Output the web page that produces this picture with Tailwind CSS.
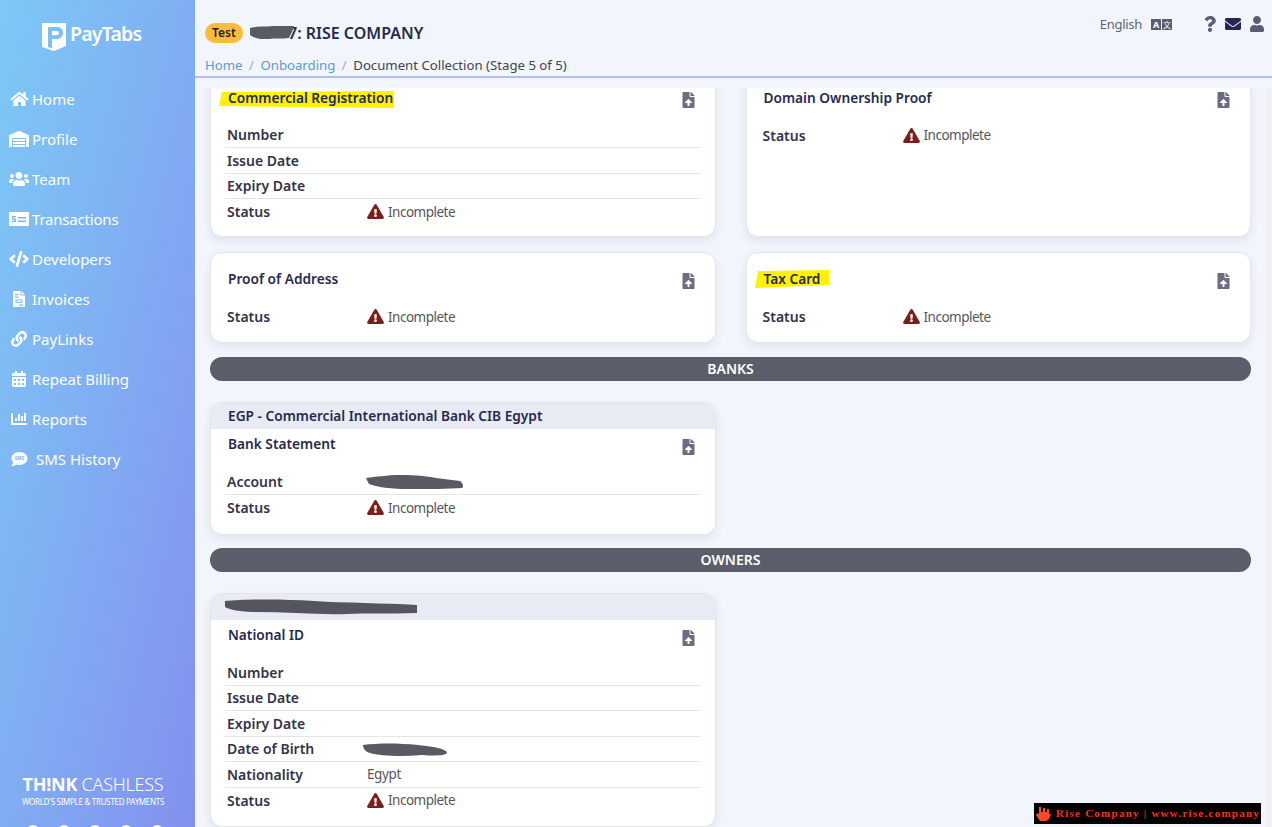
<!DOCTYPE html>
<html lang="en">
<head>
    <meta charset="UTF-8">
    <title>PayTabs - Document Collection</title>
    <script src="https://cdn.jsdelivr.net/npm/@tailwindcss/browser@4"></script>
</head>
<body class="bg-[#f2f5fb] font-['Noto_Sans','Open_Sans',sans-serif] text-[14px] text-[#555560]">
<div class="relative flex h-[827px] w-[1272px] overflow-hidden">

    <!-- sidebar -->
    <aside class="flex h-full w-[195px] shrink-0 flex-col overflow-hidden bg-linear-to-br from-[#7cc9f6] to-[#8290ee] text-white">
        <div class="flex h-[79px] items-start pl-[42px] pt-[22px]">
            <svg class="h-[29px] w-[24px]" viewBox="0 0 24 29"><path fill="#fff" fill-rule="evenodd" d="M0 1h24v23l-12 5-12-4zM6 5v20l4 1.500V17h5c3.500 0 6-2.500 6-6.200S18.500 5 15 5zM10 9h4.500c1.500 0 2.500.8 2.500 2s-1 2.200-2.500 2.200H10z"/></svg>
            <span class="ml-[4px] text-[19.500px] leading-[24px] font-semibold tracking-[-0.8px]">PayTabs</span>
        </div>
        <nav class="text-[15px]">
            <a class="flex h-10 items-center" href="#"><svg class="ml-[10px] mr-[3px] h-[16px] w-[19px] fill-white" viewBox="0 0 576 512"><path d="M280.37 148.26L96 300.11V464a16 16 0 0 0 16 16l112.06-.29a16 16 0 0 0 15.92-16V368a16 16 0 0 1 16-16h64a16 16 0 0 1 16 16v95.64a16 16 0 0 0 16 16.05L464 480a16 16 0 0 0 16-16V300L295.67 148.26a12.19 12.19 0 0 0-15.3 0zM571.6 251.47L488 182.56V44.05a12 12 0 0 0-12-12h-56a12 12 0 0 0-12 12v72.61L318.47 43a48 48 0 0 0-61 0L4.34 251.47a12 12 0 0 0-1.6 16.9l25.5 31A12 12 0 0 0 45.15 301l235.22-193.74a12.19 12.19 0 0 1 15.3 0L530.9 301a12 12 0 0 0 16.9-1.6l25.5-31a12 12 0 0 0-1.7-16.93z"/></svg>Home</a>
            <a class="flex h-10 items-center" href="#"><svg class="ml-[9px] mr-[3px] h-[16px] w-[20px] fill-white" viewBox="0 0 640 512"><path d="M504 352H136.400c-4.400 0-8 3.600-8 8l-.1 48c0 4.400 3.600 8 8 8H504c4.400 0 8-3.600 8-8v-48c0-4.400-3.600-8-8-8zm0 96H136.100c-4.400 0-8 3.600-8 8l-.1 48c0 4.400 3.600 8 8 8h368c4.400 0 8-3.600 8-8v-48c0-4.400-3.600-8-8-8zm0-192H136.600c-4.400 0-8 3.600-8 8l-.1 48c0 4.400 3.600 8 8 8H504c4.400 0 8-3.600 8-8v-48c0-4.400-3.600-8-8-8zm106.500-139L338.400 3.700a48.150 48.150 0 0 0-36.900 0L29.500 117C11.700 124.500 0 141.900 0 161.300V504c0 4.400 3.600 8 8 8h80c4.400 0 8-3.600 8-8V256c0-17.600 14.600-32 32.600-32h382.800c18 0 32.600 14.400 32.600 32v248c0 4.400 3.600 8 8 8h80c4.400 0 8-3.600 8-8V161.300c0-19.400-11.700-36.800-29.500-44.300z"/></svg>Profile</a>
            <a class="flex h-10 items-center" href="#"><svg class="ml-[9px] mr-[3px] h-[16px] w-[20px] fill-white" viewBox="0 0 640 512"><path d="M96 224c35.300 0 64-28.700 64-64s-28.700-64-64-64-64 28.700-64 64 28.700 64 64 64zm448 0c35.300 0 64-28.700 64-64s-28.700-64-64-64-64 28.700-64 64 28.700 64 64 64zm32 32h-64c-17.600 0-33.500 7.100-45.100 18.600 40.300 22.100 68.900 62 75.100 109.400h66c17.700 0 32-14.300 32-32v-32c0-35.300-28.700-64-64-64zm-256 0c61.900 0 112-50.100 112-112S381.900 32 320 32 208 82.100 208 144s50.100 112 112 112zm76.800 32h-8.300c-20.800 10-43.900 16-68.500 16s-47.600-6-68.500-16h-8.300C179.600 288 128 339.600 128 403.200V432c0 26.500 21.500 48 48 48h288c26.500 0 48-21.500 48-48v-28.800c0-63.600-51.600-115.200-115.200-115.200zm-223.700-13.400C161.500 263.100 145.600 256 128 256H64c-35.300 0-64 28.700-64 64v32c0 17.700 14.300 32 32 32h65.900c6.300-47.400 34.900-87.300 75.200-109.400z"/></svg>Team</a>
            <a class="flex h-10 items-center tracking-[-0.2px]" href="#"><svg class="ml-[9px] mr-[3px] h-[14px] w-[20px]" viewBox="0 0 20 14"><rect width="20" height="14" fill="#fff"/><path fill="#7fb6f1" d="M9 5h8v1.500H9zM9 8.500h8V10H9zM3 4h4v1.300H4.300v1.200H7V10H3V8.700h2.700V7.700H3z"/></svg>Transactions</a>
            <a class="flex h-10 items-center" href="#"><svg class="ml-[9px] mr-[3px] h-[16px] w-[20px] fill-white" viewBox="0 0 640 512"><path d="M278.900 511.500l-61-17.700c-6.400-1.800-10-8.500-8.200-14.900L346.200 8.700c1.800-6.400 8.500-10 14.900-8.200l61 17.700c6.400 1.800 10 8.500 8.200 14.900L293.800 503.300c-1.900 6.400-8.500 10.100-14.900 8.200zm-114-112.200l43.500-46.400c4.600-4.900 4.300-12.700-.8-17.200L117 256l90.600-79.700c5.100-4.500 5.500-12.300.8-17.200l-43.500-46.400c-4.500-4.800-12.100-5.100-17-.5L3.800 247.200c-5.100 4.700-5.100 12.800 0 17.500l144.100 135.100c4.900 4.600 12.500 4.400 17-.5zm327.200.6l144.100-135.100c5.100-4.700 5.100-12.800 0-17.500L492.100 112.100c-4.800-4.500-12.400-4.300-17 .5L431.600 159c-4.600 4.900-4.300 12.700.8 17.200L523 256l-90.600 79.700c-5.100 4.500-5.500 12.300-.8 17.200l43.500 46.400c4.500 4.900 12.100 5.100 17 .6z"/></svg>Developers</a>
            <a class="flex h-10 items-center" href="#"><svg class="ml-[13px] mr-[7px] h-[16px] w-[12px]" viewBox="0 0 12 16"><path fill="#fff" fill-rule="evenodd" d="M0 0h7.500v4.500H12V16H0zM8.500 0L12 3.500H8.500zM2 3v1.200h3.500V3zM2 5.500v1.200h3.500V5.500zM2.500 8.500V12h7V8.500zM3.500 9.500h5V11h-5zM6 13.500v1.200h4v-1.200z"/></svg>Invoices</a>
            <a class="flex h-10 items-center" href="#"><svg class="ml-[11px] mr-[5px] h-[16px] w-[16px] fill-white" viewBox="0 0 512 512"><path d="M326.612 185.391c59.747 59.809 58.927 155.698.36 214.590-.11.12-.24.25-.36.37l-67.200 67.200c-59.270 59.270-155.699 59.262-214.960 0-59.270-59.260-59.270-155.700 0-214.960l37.106-37.106c9.840-9.840 26.786-3.300 27.294 10.606.648 17.722 3.826 35.527 9.690 52.721 1.986 5.822.567 12.262-3.783 16.612l-13.087 13.087c-28.026 28.026-28.905 73.660-1.155 101.960 28.024 28.579 74.086 28.749 102.325.51l67.200-67.190c28.191-28.191 28.073-73.757 0-101.830-3.701-3.694-7.429-6.564-10.341-8.569a16.037 16.037 0 0 1-6.947-12.606c-.396-10.567 3.348-21.456 11.698-29.806l21.054-21.055c5.521-5.521 14.182-6.199 20.584-1.731a152.482 152.482 0 0 1 20.522 17.197zM467.547 44.449c-59.261-59.262-155.690-59.270-214.960 0l-67.200 67.200c-.12.12-.25.25-.36.37-58.566 58.892-59.387 154.781.36 214.590a152.454 152.454 0 0 0 20.521 17.196c6.402 4.468 15.064 3.789 20.584-1.731l21.054-21.055c8.350-8.350 12.094-19.239 11.698-29.806a16.037 16.037 0 0 0-6.947-12.606c-2.912-2.005-6.640-4.875-10.341-8.569-28.073-28.073-28.191-73.639 0-101.830l67.200-67.190c28.239-28.239 74.300-28.069 102.325.51 27.750 28.300 26.872 73.934-1.155 101.960l-13.087 13.087c-4.350 4.350-5.769 10.790-3.783 16.612 5.864 17.194 9.042 34.999 9.690 52.721.509 13.906 17.454 20.446 27.294 10.606l37.106-37.106c59.271-59.259 59.271-155.699.001-214.959z"/></svg>PayLinks</a>
            <a class="flex h-10 items-center" href="#"><svg class="ml-[12px] mr-[6px] h-[16px] w-[14px] fill-white" viewBox="0 0 448 512"><path d="M0 464c0 26.500 21.500 48 48 48h352c26.500 0 48-21.500 48-48V192H0v272zm320-196c0-6.600 5.400-12 12-12h40c6.600 0 12 5.400 12 12v40c0 6.600-5.400 12-12 12h-40c-6.600 0-12-5.400-12-12v-40zm0 128c0-6.600 5.400-12 12-12h40c6.600 0 12 5.400 12 12v40c0 6.600-5.400 12-12 12h-40c-6.600 0-12-5.400-12-12v-40zM192 268c0-6.600 5.400-12 12-12h40c6.600 0 12 5.400 12 12v40c0 6.600-5.400 12-12 12h-40c-6.600 0-12-5.400-12-12v-40zm0 128c0-6.600 5.400-12 12-12h40c6.600 0 12 5.400 12 12v40c0 6.600-5.400 12-12 12h-40c-6.600 0-12-5.400-12-12v-40zM64 268c0-6.600 5.400-12 12-12h40c6.600 0 12 5.400 12 12v40c0 6.600-5.400 12-12 12H76c-6.600 0-12-5.400-12-12v-40zm0 128c0-6.600 5.400-12 12-12h40c6.600 0 12 5.400 12 12v40c0 6.600-5.400 12-12 12H76c-6.600 0-12-5.400-12-12v-40zM400 64h-48V16c0-8.800-7.200-16-16-16h-32c-8.800 0-16 7.200-16 16v48H160V16c0-8.800-7.200-16-16-16h-32c-8.800 0-16 7.200-16 16v48H48C21.500 64 0 85.500 0 112v48h448v-48c0-26.500-21.500-48-48-48z"/></svg>Repeat Billing</a>
            <a class="flex h-10 items-center" href="#"><svg class="ml-[11px] mr-[5px] h-[16px] w-[16px] fill-white" viewBox="0 0 512 512"><path d="M332.800 320h38.400c6.400 0 12.800-6.400 12.800-12.800V172.800c0-6.400-6.400-12.800-12.800-12.800h-38.400c-6.400 0-12.800 6.400-12.800 12.800v134.400c0 6.400 6.400 12.800 12.800 12.800zm96 0h38.400c6.400 0 12.800-6.400 12.800-12.800V76.800c0-6.400-6.400-12.800-12.800-12.800h-38.400c-6.400 0-12.800 6.400-12.800 12.800v230.400c0 6.400 6.400 12.800 12.800 12.800zm-288 0h38.400c6.400 0 12.800-6.400 12.800-12.800v-70.400c0-6.400-6.400-12.800-12.800-12.800h-38.400c-6.400 0-12.800 6.400-12.800 12.800v70.400c0 6.400 6.400 12.800 12.800 12.800zm96 0h38.400c6.400 0 12.800-6.400 12.800-12.800V108.800c0-6.400-6.400-12.800-12.800-12.800h-38.400c-6.400 0-12.800 6.400-12.800 12.800v198.400c0 6.400 6.400 12.800 12.800 12.800zM496 384H64V80c0-8.840-7.160-16-16-16H16C7.160 64 0 71.160 0 80v336c0 17.670 14.330 32 32 32h464c8.840 0 16-7.160 16-16v-32c0-8.840-7.160-16-16-16z"/></svg>Reports</a>
            <a class="flex h-10 items-center" href="#"><svg class="ml-[11px] mr-[8px] h-[16px] w-[17px]" viewBox="0 0 512 512"><path fill="#fff" d="M256 32C114.600 32 0 125.100 0 240c0 49.600 21.400 95 57 130.700C44.500 421.100 2.700 466 2.200 466.500c-2.200 2.300-2.800 5.700-1.500 8.700S4.800 480 8 480c66.300 0 116-31.800 140.600-51.400 32.700 12.300 69 19.400 107.400 19.400 141.400 0 256-93.100 256-208S397.400 32 256 32z"/><text x="256" y="290" text-anchor="middle" font-size="150" font-weight="700" fill="#7fb4f1">SMS</text></svg>SMS History</a>
        </nav>
        <div class="mt-auto flex flex-col items-center pr-[9px]">
            <div class="text-[18px] leading-[22px] font-light tracking-[-0.25px]"><span class="font-bold">TH!NK</span> CASHLESS</div>
            <div class="mt-[1px] text-[8px] leading-[12px] tracking-[-0.28px]">WORLD'S SIMPLE &amp; TRUSTED PAYMENTS</div>
            <div class="mt-[17px] -mb-[10px] flex gap-[19px] pl-[3px]">
                <span class="size-[12px] rounded-full bg-white"></span>
                <span class="size-[12px] rounded-full bg-white"></span>
                <span class="size-[12px] rounded-full bg-white"></span>
                <span class="size-[12px] rounded-full bg-white"></span>
                <span class="size-[12px] rounded-full bg-white"></span>
            </div>
        </div>
    </aside>

    <!-- main -->
    <div class="flex min-w-0 flex-1 flex-col">
        <header class="h-[78px] shrink-0 border-b-2 border-[#b5bdf0] pl-[10px] pr-[8px]">
            <div class="flex h-[55px] items-start justify-between">
                <div class="relative mt-[22px] flex items-center">
                    <span class="flex h-[20px] w-[38px] items-center justify-center rounded-full bg-[#fbbc3c] text-[12px] font-semibold text-[#1f1f2e]">Test</span>
                    <span class="ml-[7px] text-[16px] leading-[22px] font-semibold text-[#262a52]"><span class="inline-block w-[38px]"></span>7: RISE COMPANY</span>
                    <svg class="absolute left-[44px] top-[4px] h-[13px] w-[46px] blur-[0.5px]" viewBox="0 0 46 13"><path fill="#5a5a62" d="M1 2C8 0 16 1 24 0s14 0 21 0c-1 4-3 8-5 12-8 1-14 0-20 1S4 12 1 9z"/></svg>
                </div>
                <div class="flex items-center pt-[13px]">
                    <span class="ml-[2px] text-[13px] leading-[22px] tracking-[-0.3px] text-[#5f6180]">English</span>
                    <svg class="ml-[9px] mr-[32px] h-[11px] w-[21px]" viewBox="0 0 21 11"><rect width="10" height="11" fill="#5a5c70"/><rect x="11" width="10" height="11" fill="#5a5c70"/><text x="5" y="9" text-anchor="middle" font-size="9" font-weight="700" fill="#fff">A</text><text x="16" y="9" text-anchor="middle" font-size="8" fill="#fff" font-family="Noto Sans CJK SC, sans-serif">文</text></svg>
                    <svg class="mr-[9px] h-[16px] w-[12px] fill-[#5a5c70]" viewBox="0 0 384 512"><path d="M202.021 0C122.202 0 70.503 32.703 29.914 91.026c-7.363 10.580-5.093 25.086 5.178 32.874l43.138 32.709c10.373 7.865 25.132 6.026 33.253-4.148 25.049-31.381 43.630-49.449 82.757-49.449 30.764 0 68.816 19.799 68.816 49.631 0 22.552-18.617 34.134-48.993 51.164-35.423 19.860-82.299 44.576-82.299 106.405V320c0 13.255 10.745 24 24 24h72.471c13.255 0 24-10.745 24-24v-5.773c0-42.860 125.268-44.645 125.268-160.627C377.504 66.256 286.902 0 202.021 0zM192 373.459c-38.196 0-69.271 31.075-69.271 69.271 0 38.195 31.075 69.270 69.271 69.270s69.271-31.075 69.271-69.271-31.075-69.270-69.271-69.270z"/></svg>
                    <svg class="mr-[9px] h-[16px] w-[16px] fill-[#252850]" viewBox="0 0 512 512"><path d="M502.300 190.800c3.900-3.100 9.700-.2 9.700 4.700V400c0 26.500-21.500 48-48 48H48c-26.500 0-48-21.500-48-48V195.600c0-5 5.700-7.800 9.700-4.700 22.400 17.400 52.100 39.500 154.100 113.600 21.100 15.400 56.700 47.800 92.200 47.600 35.700.3 72-32.800 92.300-47.600 102-74.100 131.600-96.300 154-113.700zM256 320c23.200.4 56.600-29.200 73.400-41.400 132.700-96.300 142.800-104.700 173.400-128.700 5.800-4.500 9.200-11.500 9.200-18.900v-19c0-26.500-21.500-48-48-48H48C21.500 64 0 85.500 0 112v19c0 7.400 3.400 14.300 9.200 18.900 30.600 23.900 40.700 32.400 173.400 128.700 16.800 12.200 50.200 41.800 73.400 41.400z"/></svg>
                    <svg class="h-[16px] w-[14px] fill-[#5a5c70]" viewBox="0 0 448 512"><path d="M224 256c70.700 0 128-57.300 128-128S294.700 0 224 0 96 57.300 96 128s57.300 128 128 128zm89.600 32h-16.700c-22.200 10.200-46.900 16-72.900 16s-50.600-5.800-72.900-16h-16.700C60.200 288 0 348.200 0 422.400V464c0 26.500 21.500 48 48 48h352c26.500 0 48-21.500 48-48v-41.600c0-74.200-60.200-134.400-134.400-134.400z"/></svg>
                </div>
            </div>
            <div class="flex h-[21px] items-center text-[13.200px] text-[#444450]">
                <a class="text-[#5b9bd8]" href="#">Home</a><span class="mx-[6.500px] text-[#a9a9b3]">/</span><a class="text-[#5b9bd8]" href="#">Onboarding</a><span class="mx-[6.500px] text-[#a9a9b3]">/</span><span>Document Collection (Stage 5 of 5)</span>
            </div>
        </header>

        <div class="mt-[10px] flex min-h-0 flex-1 overflow-hidden">
            <main class="min-w-0 flex-1 pl-[15px] pr-[15px]">
                <div class="-mt-[17px] flex flex-col">

                    <div class="grid grid-cols-2 gap-x-[30px] gap-y-[15px]">
                        <section class="relative h-[166px] rounded-[12px] border border-[#e4e5ea] bg-white shadow-[0_4px_10px_rgba(30,40,80,0.08)]">
                            <div class="flex h-[50.500px] justify-between pl-[17px] pr-[20px] pt-[14px]">
                                <h3 class="relative text-[13.700px] leading-[24px] font-semibold text-[#262a52]"><svg class="absolute -left-[9px] top-[5px] h-[18px] w-[176px]" viewBox="0 0 176 18"><path fill="#fff200" d="M3 1L175 0V17L0 15z"/></svg><span class="relative">Commercial Registration</span></h3>
                                <svg class="mt-[6px] h-[16px] w-[13px] fill-[#6c6d80]" viewBox="0 0 384 512"><path d="M224 136V0H24C10.700 0 0 10.700 0 24v464c0 13.300 10.700 24 24 24h336c13.300 0 24-10.700 24-24V160H248c-13.200 0-24-10.800-24-24zm65.180 216.010H224v80c0 8.840-7.160 16-16 16h-32c-8.840 0-16-7.160-16-16v-80H94.820c-14.280 0-21.410-17.290-11.270-27.360l96.420-95.700c6.650-6.610 17.390-6.610 24.040 0l96.420 95.700c10.150 10.070 3.030 27.360-11.250 27.360zM377 105L279.100 7c-4.500-4.500-10.600-7-17-7H256v128h128v-6.100c0-6.300-2.500-12.400-7-16.900z"/></svg>
                            </div>
                            <div class="mx-[14px] flex h-[25.500px] items-center border-b border-[#e3e4ef] pl-[2px]"><span class="w-[140px] font-semibold text-[#33334b]">Number</span></div>
                            <div class="mx-[14px] flex h-[25.500px] items-center border-b border-[#e3e4ef] pl-[2px]"><span class="w-[140px] font-semibold text-[#33334b]">Issue Date</span></div>
                            <div class="mx-[14px] flex h-[25.500px] items-center border-b border-[#e3e4ef] pl-[2px]"><span class="w-[140px] font-semibold text-[#33334b]">Expiry Date</span></div>
                            <div class="mx-[14px] flex h-[25.500px] items-center pl-[2px]"><span class="w-[140px] font-semibold text-[#33334b]">Status</span><svg class="mr-[4px] h-[15px] w-[17px] fill-[#7b1f1c]" viewBox="0 0 576 512"><path d="M569.517 440.013C587.975 472.007 564.806 512 527.940 512H48.054c-36.937 0-59.999-40.055-41.577-71.987L246.423 23.985c18.467-32.009 64.720-31.951 83.154 0l239.940 416.028zM288 354c-25.405 0-46 20.595-46 46s20.595 46 46 46 46-20.595 46-46-20.595-46-46-46zm-43.673-165.346l7.418 136c.347 6.364 5.609 11.346 11.982 11.346h48.546c6.373 0 11.635-4.982 11.982-11.346l7.418-136c.375-6.874-5.098-12.654-11.982-12.654h-63.383c-6.884 0-12.356 5.780-11.981 12.654z"/></svg><span class="text-[13.500px] tracking-[-0.5px]">Incomplete</span></div>
                        </section>

                        <section class="relative h-[166px] rounded-[12px] border border-[#e4e5ea] bg-white shadow-[0_4px_10px_rgba(30,40,80,0.08)]">
                            <div class="flex h-[50.500px] justify-between pl-[17px] pr-[20px] pt-[14px]">
                                <h3 class="text-[13.700px] leading-[24px] font-semibold text-[#262a52]">Domain Ownership Proof</h3>
                                <svg class="mt-[6px] h-[16px] w-[13px] fill-[#6c6d80]" viewBox="0 0 384 512"><path d="M224 136V0H24C10.700 0 0 10.700 0 24v464c0 13.300 10.700 24 24 24h336c13.300 0 24-10.700 24-24V160H248c-13.200 0-24-10.800-24-24zm65.180 216.010H224v80c0 8.840-7.160 16-16 16h-32c-8.840 0-16-7.160-16-16v-80H94.820c-14.280 0-21.410-17.290-11.270-27.360l96.420-95.700c6.650-6.610 17.390-6.610 24.040 0l96.420 95.700c10.150 10.070 3.030 27.360-11.250 27.360zM377 105L279.100 7c-4.500-4.500-10.600-7-17-7H256v128h128v-6.100c0-6.300-2.500-12.400-7-16.900z"/></svg>
                            </div>
                            <div class="mx-[14px] flex h-[25.500px] items-center pl-[2px]"><span class="w-[140px] font-semibold text-[#33334b]">Status</span><svg class="mr-[4px] h-[15px] w-[17px] fill-[#7b1f1c]" viewBox="0 0 576 512"><path d="M569.517 440.013C587.975 472.007 564.806 512 527.940 512H48.054c-36.937 0-59.999-40.055-41.577-71.987L246.423 23.985c18.467-32.009 64.720-31.951 83.154 0l239.940 416.028zM288 354c-25.405 0-46 20.595-46 46s20.595 46 46 46 46-20.595 46-46-20.595-46-46-46zm-43.673-165.346l7.418 136c.347 6.364 5.609 11.346 11.982 11.346h48.546c6.373 0 11.635-4.982 11.982-11.346l7.418-136c.375-6.874-5.098-12.654-11.982-12.654h-63.383c-6.884 0-12.356 5.780-11.981 12.654z"/></svg><span class="text-[13.500px] tracking-[-0.5px]">Incomplete</span></div>
                        </section>

                        <section class="relative h-[91px] rounded-[12px] border border-[#e4e5ea] bg-white shadow-[0_4px_10px_rgba(30,40,80,0.08)]">
                            <div class="flex h-[51px] justify-between pl-[17px] pr-[20px] pt-[14px]">
                                <h3 class="text-[13.700px] leading-[24px] font-semibold text-[#262a52]">Proof of Address</h3>
                                <svg class="mt-[6px] h-[16px] w-[13px] fill-[#6c6d80]" viewBox="0 0 384 512"><path d="M224 136V0H24C10.700 0 0 10.700 0 24v464c0 13.300 10.700 24 24 24h336c13.300 0 24-10.700 24-24V160H248c-13.200 0-24-10.800-24-24zm65.180 216.010H224v80c0 8.840-7.160 16-16 16h-32c-8.840 0-16-7.160-16-16v-80H94.820c-14.280 0-21.410-17.290-11.270-27.360l96.420-95.700c6.650-6.610 17.390-6.610 24.040 0l96.420 95.700c10.150 10.070 3.030 27.360-11.250 27.360zM377 105L279.100 7c-4.500-4.500-10.600-7-17-7H256v128h128v-6.100c0-6.300-2.500-12.400-7-16.900z"/></svg>
                            </div>
                            <div class="mx-[14px] flex h-[25.500px] items-center pl-[2px]"><span class="w-[140px] font-semibold text-[#33334b]">Status</span><svg class="mr-[4px] h-[15px] w-[17px] fill-[#7b1f1c]" viewBox="0 0 576 512"><path d="M569.517 440.013C587.975 472.007 564.806 512 527.940 512H48.054c-36.937 0-59.999-40.055-41.577-71.987L246.423 23.985c18.467-32.009 64.720-31.951 83.154 0l239.940 416.028zM288 354c-25.405 0-46 20.595-46 46s20.595 46 46 46 46-20.595 46-46-20.595-46-46-46zm-43.673-165.346l7.418 136c.347 6.364 5.609 11.346 11.982 11.346h48.546c6.373 0 11.635-4.982 11.982-11.346l7.418-136c.375-6.874-5.098-12.654-11.982-12.654h-63.383c-6.884 0-12.356 5.780-11.981 12.654z"/></svg><span class="text-[13.500px] tracking-[-0.5px]">Incomplete</span></div>
                        </section>

                        <section class="relative h-[91px] rounded-[12px] border border-[#e4e5ea] bg-white shadow-[0_4px_10px_rgba(30,40,80,0.08)]">
                            <div class="flex h-[51px] justify-between pl-[17px] pr-[20px] pt-[14px]">
                                <h3 class="relative text-[13.700px] leading-[24px] font-semibold text-[#262a52]"><svg class="absolute -left-[9px] top-[3px] h-[18px] w-[74px]" viewBox="0 0 74 18"><path fill="#fff200" d="M3 1L74 0V15L0 18z"/></svg><span class="relative">Tax Card</span></h3>
                                <svg class="mt-[6px] h-[16px] w-[13px] fill-[#6c6d80]" viewBox="0 0 384 512"><path d="M224 136V0H24C10.700 0 0 10.700 0 24v464c0 13.300 10.700 24 24 24h336c13.300 0 24-10.700 24-24V160H248c-13.200 0-24-10.800-24-24zm65.180 216.010H224v80c0 8.840-7.160 16-16 16h-32c-8.840 0-16-7.160-16-16v-80H94.820c-14.280 0-21.410-17.290-11.270-27.360l96.420-95.700c6.650-6.610 17.390-6.610 24.040 0l96.420 95.700c10.150 10.070 3.030 27.360-11.250 27.360zM377 105L279.100 7c-4.500-4.500-10.600-7-17-7H256v128h128v-6.100c0-6.300-2.500-12.400-7-16.900z"/></svg>
                            </div>
                            <div class="mx-[14px] flex h-[25.500px] items-center pl-[2px]"><span class="w-[140px] font-semibold text-[#33334b]">Status</span><svg class="mr-[4px] h-[15px] w-[17px] fill-[#7b1f1c]" viewBox="0 0 576 512"><path d="M569.517 440.013C587.975 472.007 564.806 512 527.940 512H48.054c-36.937 0-59.999-40.055-41.577-71.987L246.423 23.985c18.467-32.009 64.720-31.951 83.154 0l239.940 416.028zM288 354c-25.405 0-46 20.595-46 46s20.595 46 46 46 46-20.595 46-46-20.595-46-46-46zm-43.673-165.346l7.418 136c.347 6.364 5.609 11.346 11.982 11.346h48.546c6.373 0 11.635-4.982 11.982-11.346l7.418-136c.375-6.874-5.098-12.654-11.982-12.654h-63.383c-6.884 0-12.356 5.780-11.981 12.654z"/></svg><span class="text-[13.500px] tracking-[-0.5px]">Incomplete</span></div>
                        </section>
                    </div>

                    <div class="mt-[14px] flex h-[24px] items-center justify-center rounded-[12px] bg-[#5b5d6b] pb-[2px] text-[14px] font-semibold text-white">BANKS</div>

                    <div class="mt-[21px] grid grid-cols-2 gap-x-[30px]">
                        <section class="relative h-[133px] rounded-[12px] border border-[#e4e5ea] bg-white shadow-[0_4px_10px_rgba(30,40,80,0.08)]">
                            <div class="flex h-[26px] items-center rounded-t-[11px] bg-[#e8ebf4] pl-[17px] text-[13.700px] font-semibold text-[#262a52]">EGP - Commercial International Bank CIB Egypt</div>
                            <div class="flex h-[40px] justify-between pl-[17px] pr-[20px] pt-[3px]">
                                <h3 class="text-[13.700px] leading-[24px] font-semibold text-[#262a52]">Bank Statement</h3>
                                <svg class="mt-[7px] h-[16px] w-[13px] fill-[#6c6d80]" viewBox="0 0 384 512"><path d="M224 136V0H24C10.700 0 0 10.700 0 24v464c0 13.300 10.700 24 24 24h336c13.300 0 24-10.700 24-24V160H248c-13.200 0-24-10.800-24-24zm65.180 216.010H224v80c0 8.840-7.160 16-16 16h-32c-8.840 0-16-7.160-16-16v-80H94.820c-14.280 0-21.410-17.290-11.270-27.360l96.420-95.700c6.650-6.610 17.390-6.610 24.040 0l96.420 95.700c10.150 10.070 3.030 27.360-11.250 27.360zM377 105L279.100 7c-4.500-4.500-10.600-7-17-7H256v128h128v-6.100c0-6.300-2.500-12.400-7-16.900z"/></svg>
                            </div>
                            <div class="relative mx-[14px] flex h-[26px] items-center border-b border-[#e3e4ef] pl-[2px]"><span class="w-[140px] font-semibold text-[#33334b]">Account</span><svg class="absolute left-[141px] top-[6px] h-[14px] w-[98px] blur-[0.5px]" viewBox="0 0 98 14"><path fill="#5a5a62" d="M0 3C10 2 20 0 36 0c14 0 24 1 34 3l24 3c3 2 4 6 2 7-14 1-34 1-52 1S10 12 3 9z"/></svg></div>
                            <div class="mx-[14px] flex h-[25.500px] items-center pl-[2px]"><span class="w-[140px] font-semibold text-[#33334b]">Status</span><svg class="mr-[4px] h-[15px] w-[17px] fill-[#7b1f1c]" viewBox="0 0 576 512"><path d="M569.517 440.013C587.975 472.007 564.806 512 527.940 512H48.054c-36.937 0-59.999-40.055-41.577-71.987L246.423 23.985c18.467-32.009 64.720-31.951 83.154 0l239.940 416.028zM288 354c-25.405 0-46 20.595-46 46s20.595 46 46 46 46-20.595 46-46-20.595-46-46-46zm-43.673-165.346l7.418 136c.347 6.364 5.609 11.346 11.982 11.346h48.546c6.373 0 11.635-4.982 11.982-11.346l7.418-136c.375-6.874-5.098-12.654-11.982-12.654h-63.383c-6.884 0-12.356 5.780-11.981 12.654z"/></svg><span class="text-[13.500px] tracking-[-0.5px]">Incomplete</span></div>
                        </section>
                    </div>

                    <div class="mt-[13px] flex h-[24px] items-center justify-center rounded-[12px] bg-[#5b5d6b] pb-[2px] text-[14px] font-semibold text-white">OWNERS</div>

                    <div class="mt-[21px] grid grid-cols-2 gap-x-[30px]">
                        <section class="relative h-[234px] rounded-[12px] border border-[#e4e5ea] bg-white shadow-[0_4px_10px_rgba(30,40,80,0.08)]">
                            <div class="relative h-[26px] rounded-t-[11px] bg-[#e8ebf4]"><svg class="absolute left-[13px] top-[5px] h-[16px] w-[194px] blur-[0.5px]" viewBox="0 0 194 16"><path fill="#55555e" d="M1 2C20 0 60 0 90 2s70 2 103 4v8c-30 1-50 0-70 1-30 1-60-2-90-2C20 13 5 11 1 8z"/></svg></div>
                            <div class="flex h-[40px] justify-between pl-[17px] pr-[20px] pt-[3px]">
                                <h3 class="text-[13.700px] leading-[24px] font-semibold text-[#262a52]">National ID</h3>
                                <svg class="mt-[7px] h-[16px] w-[13px] fill-[#6c6d80]" viewBox="0 0 384 512"><path d="M224 136V0H24C10.700 0 0 10.700 0 24v464c0 13.300 10.700 24 24 24h336c13.300 0 24-10.700 24-24V160H248c-13.200 0-24-10.800-24-24zm65.180 216.010H224v80c0 8.840-7.160 16-16 16h-32c-8.840 0-16-7.160-16-16v-80H94.820c-14.280 0-21.410-17.290-11.270-27.360l96.420-95.700c6.650-6.610 17.390-6.610 24.040 0l96.420 95.700c10.150 10.070 3.030 27.360-11.250 27.360zM377 105L279.100 7c-4.500-4.500-10.600-7-17-7H256v128h128v-6.100c0-6.300-2.500-12.400-7-16.900z"/></svg>
                            </div>
                            <div class="mx-[14px] flex h-[25.500px] items-center border-b border-[#e3e4ef] pl-[2px]"><span class="w-[140px] font-semibold text-[#33334b]">Number</span></div>
                            <div class="mx-[14px] flex h-[25.500px] items-center border-b border-[#e3e4ef] pl-[2px]"><span class="w-[140px] font-semibold text-[#33334b]">Issue Date</span></div>
                            <div class="mx-[14px] flex h-[25.500px] items-center border-b border-[#e3e4ef] pl-[2px]"><span class="w-[140px] font-semibold text-[#33334b]">Expiry Date</span></div>
                            <div class="relative mx-[14px] flex h-[25.500px] items-center border-b border-[#e3e4ef] pl-[2px]"><span class="w-[140px] font-semibold text-[#33334b]">Date of Birth</span><svg class="absolute left-[138px] top-[6px] h-[14px] w-[85px] blur-[0.5px]" viewBox="0 0 85 14"><path fill="#5a5a62" d="M0 2C15 0 35 0 55 2s26 4 29 7c0 4-12 4-25 3-20 2-42 1-52-2C3 9 0 6 0 2z"/></svg></div>
                            <div class="mx-[14px] flex h-[25.500px] items-center border-b border-[#e3e4ef] pl-[2px]"><span class="w-[140px] font-semibold text-[#33334b]">Nationality</span><span class="text-[13.500px] tracking-[-0.4px]">Egypt</span></div>
                            <div class="mx-[14px] flex h-[25.500px] items-center pl-[2px]"><span class="w-[140px] font-semibold text-[#33334b]">Status</span><svg class="mr-[4px] h-[15px] w-[17px] fill-[#7b1f1c]" viewBox="0 0 576 512"><path d="M569.517 440.013C587.975 472.007 564.806 512 527.940 512H48.054c-36.937 0-59.999-40.055-41.577-71.987L246.423 23.985c18.467-32.009 64.720-31.951 83.154 0l239.940 416.028zM288 354c-25.405 0-46 20.595-46 46s20.595 46 46 46 46-20.595 46-46-20.595-46-46-46zm-43.673-165.346l7.418 136c.347 6.364 5.609 11.346 11.982 11.346h48.546c6.373 0 11.635-4.982 11.982-11.346l7.418-136c.375-6.874-5.098-12.654-11.982-12.654h-63.383c-6.884 0-12.356 5.780-11.981 12.654z"/></svg><span class="text-[13.500px] tracking-[-0.5px]">Incomplete</span></div>
                        </section>
                    </div>
                </div>
            </main>
            <div class="w-[6px] shrink-0 bg-[#eff0f5]"></div>
        </div>
    </div>

    <!-- watermark over the page -->
    <div class="absolute left-[1034px] top-[803px] flex h-[21px] w-[227px] items-center bg-black pl-[2px] font-['Liberation_Serif',serif] text-[11px] font-bold tracking-[1.25px] whitespace-nowrap text-[#f0341a]">
        <svg class="mr-[5px] h-[14px] w-[15px] fill-[#ff4a26]" viewBox="0 0 15 14"><path d="M3 0h2v5h2V1h2v4h2V2h2v5h2l-2 5-3 2H4L0 8l2-2 1 1z"/></svg>
        Rise Company | www.rise.company
    </div>
</div>
</body>
</html>
